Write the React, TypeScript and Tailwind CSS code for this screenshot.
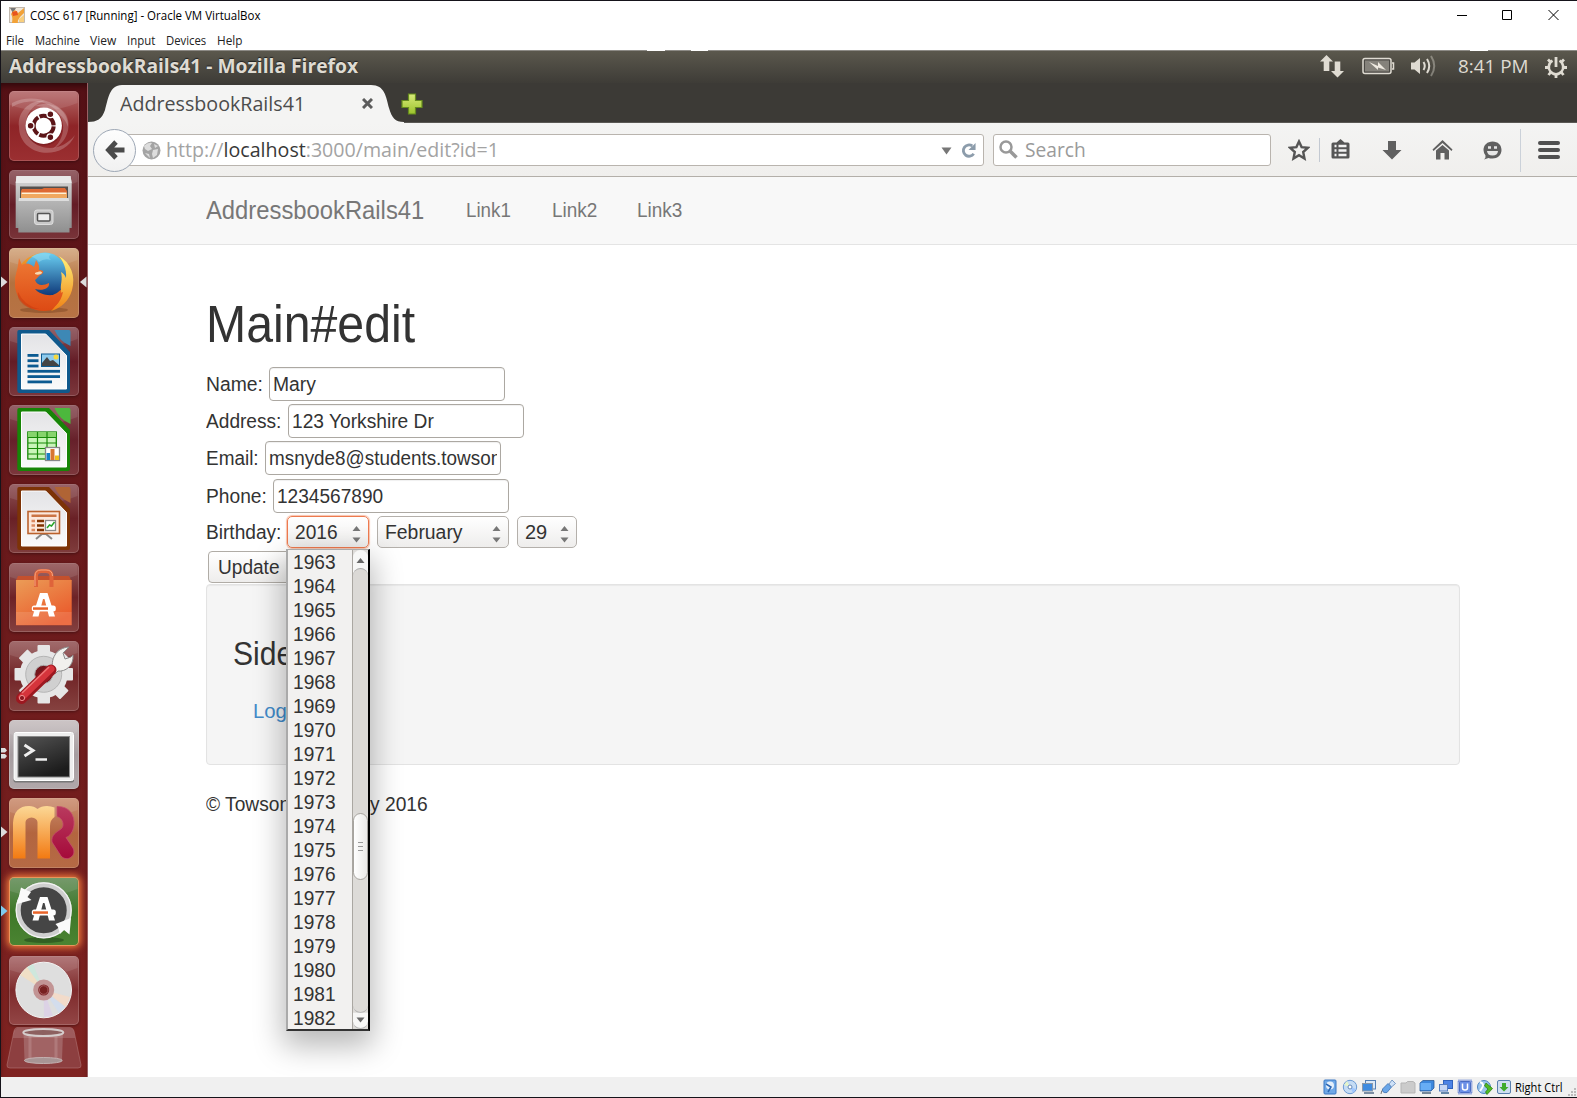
import React, { useLayoutEffect, useRef, useState } from "react";

/* Text stretched horizontally so that it occupies exactly `w` pixels. */
function Fit({ w, children, className = "" }: { w: number; children: React.ReactNode; className?: string }) {
  const ref = useRef<HTMLSpanElement>(null);
  const [scale, setScale] = useState(1);
  useLayoutEffect(() => {
    if (ref.current) setScale(w / ref.current.offsetWidth);
  }, [w]);
  return (
    <span className={"inline-block shrink-0 whitespace-pre " + className} style={{ width: w }}>
      <span ref={ref} className="inline-block origin-left" style={{ transform: `scaleX(${scale})` }}>
        {children}
      </span>
    </span>
  );
}

const menus: [string, number][] = [["File", 18], ["Machine", 45], ["View", 26], ["Input", 28.5], ["Devices", 40.5], ["Help", 25.5]];
const years = Array.from({ length: 20 }, (_, i) => 1963 + i);

/* ---------- launcher icons (70 x 70 canvas) ---------- */

function Dash() {
  return (
    <>
      <path d="M3 12 C20 3 44 8 56 22 C64 34 58 52 44 58 C60 44 56 22 40 14 C28 8 12 10 3 16Z" fill="#fff" opacity=".2" />
      <path d="M10 36 C8 20 22 8 36 10 C20 14 12 30 20 46 C28 60 52 62 66 44 C58 64 32 66 20 56 C12 50 10 42 10 36Z" fill="#fff" opacity=".22" />
      <path d="M26 15 C44 8 60 20 59 36 C56 26 46 16 26 15Z" fill="#fff" opacity=".2" />
      <circle cx="34.7" cy="36" r="18.6" fill="#5a0f14" opacity=".35" />
      <circle cx="34.7" cy="34.7" r="18.2" fill="#fff" />
      <circle cx="34.7" cy="34.7" r="10" fill="none" stroke="#5c1518" strokeWidth="4" strokeDasharray="19.4 1.55" strokeDashoffset="-.7" />
      <g fill="#5c1518" stroke="#fff" strokeWidth="1.3">
        <circle cx="21.6" cy="34.7" r="3.4" />
        <circle cx="41.4" cy="23.2" r="3.4" />
        <circle cx="41.4" cy="46.3" r="3.4" />
      </g>
    </>
  );
}
function Files() {
  return (
    <>
      <path d="M7.5 6H61.5L62.7 13V58H6.7V13Z" fill="url(#metal)" />
      <path d="M7.5 6H61.5L62.7 13H6.7Z" fill="#e9e9e9" />
      <rect x="11" y="16.500" width="48" height="14" fill="#55504d" />
      <path d="M13 19H33L35 18H56L58 21V30H12V21Z" fill="#dd6a35" />
      <rect x="12.500" y="22.500" width="45" height="1.500" fill="#fff3d8" />
      <rect x="12" y="24" width="46" height="5" fill="#f0a860" />
      <path d="M10 28H59.500L60.500 31V62.500H9.300V31Z" fill="url(#metal2)" />
      <path d="M10 28H59.500L60.200 31H9.500Z" fill="#ddd" />
      <rect x="25.500" y="40" width="18.500" height="14.500" rx="2.500" fill="#c9c9c9" stroke="#ddd" />
      <rect x="28.500" y="43.500" width="12.500" height="7.500" rx="1" fill="#eee" stroke="#555" strokeWidth="1.500" />
    </>
  );
}
function Firefox() {
  return (
    <>
      <ellipse cx="35" cy="62" rx="24" ry="3" fill="#5b2a10" opacity=".3" />
      <circle cx="35" cy="34" r="29" fill="url(#ffo)" />
      <circle cx="36" cy="26.500" r="22" fill="url(#ffb)" />
      <path d="M22 9Q30 3 42 6Q38 9 42 12Q35 10 30 14Q26 9 22 9Z" fill="#9fe2f5" opacity=".45" />
      <path d="M50 8 C62 15 67 28 63 42 C60 53 52 60 42 63 C49 56 53 49 52 42 C51 37 54 32 52 24 C54 25 56 27 57 30 C58 21 54 13 50 8Z" fill="url(#ffy)" />
      <path d="M10 10 L13 17 C18 14 21 16 25 19 L27 12 C29 15 31 18 30 22 C33 22 36 23 33 26 C29 28 29 30 26 32 C28 38 34 38 40 35 C41 41 33 43 26 41 C32 48 44 49 54 44 C52 55 44 62.500 34 62.500 C18 62.500 6 51 6 36 C6 26 9 20 9 17Z" fill="url(#fox)" />
      <path d="M26 25C30 23 33 23 33 25C31 27 28 27 26 26Z" fill="#f7d9b0" />
      <path d="M9 44Q15 58 30 61Q18 62 11 53Q8 49 9 44Z" fill="#c63a10" opacity=".5" />
    </>
  );
}
function Doc({ fill, light, children }: { fill: string; light: string; children: React.ReactNode }) {
  return (
    <>
      <path d="M10 3H40L61 25V63.500Q61 66 58.500 66H10.500Q8.300 66 8.300 63.500V5Q8.300 3 10 3Z" fill={fill} />
      <path d="M45.500 3H60Q61.500 3 61.500 5V19Q50 14 45.500 3Z" fill={light} />
      <path d="M12.500 7H36.700L57.500 28.500V62H12.500Z" fill="url(#page)" stroke="#fff" />
      {children}
    </>
  );
}
function Writer() {
  return (
    <Doc fill="#10598c" light="#3d88b5">
      <g fill="#0c5a91">
        <rect x="18.500" y="27" width="11" height="2.800" />
        <rect x="18.500" y="32.300" width="11" height="2.800" />
        <rect x="18.500" y="37.600" width="11" height="2.800" />
        <rect x="18.500" y="42.900" width="32.500" height="2.800" />
        <rect x="18.500" y="48.200" width="32.500" height="2.800" />
        <rect x="18.500" y="53.500" width="24.500" height="2.800" />
      </g>
      <rect x="32.500" y="27" width="18" height="12.500" fill="#8ecbed" stroke="#0c5a91" />
      <circle cx="47" cy="30" r="2.500" fill="#f5d83f" />
      <path d="M33 39V36L38 30L41 34L44 33L50 38V39Z" fill="#444" />
    </Doc>
  );
}
function Calc() {
  return (
    <Doc fill="#178507" light="#4cb83d">
      <rect x="18.800" y="27" width="28.500" height="27" fill="#c9f5b9" stroke="#188a08" strokeWidth="1.300" />
      <rect x="19" y="27" width="28" height="5.500" fill="#86d46c" />
      <path d="M28.500 27V54M38 27V54M19 32.500H47M19 38H47M19 43.500H47M19 49H47" stroke="#188a08" strokeWidth="1.200" />
      <rect x="36.500" y="42.500" width="14" height="13" fill="#fff" stroke="#888" strokeWidth="1.300" />
      <rect x="37.500" y="48" width="3.500" height="7" fill="#1680c4" />
      <rect x="41.500" y="44" width="4" height="11" fill="#d77632" />
      <rect x="46" y="50.500" width="4" height="4.500" fill="#efc11a" />
    </Doc>
  );
}
function Impress() {
  return (
    <Doc fill="#7d3307" light="#b06435">
      <path d="M27 55L33 50H37L43 55" fill="none" stroke="#888" strokeWidth="2" />
      <rect x="19" y="27.500" width="31.500" height="22" fill="#fce8dc" stroke="#bb622d" strokeWidth="1.600" />
      <rect x="22.500" y="30.500" width="25" height="2.500" fill="#cb7444" />
      <path d="M22.500 37H26M22.500 41.500H26M22.500 46H26" stroke="#db8961" strokeWidth="2.500" />
      <path d="M28 37H35M28 41.500H35M28 46H35" stroke="#803200" strokeWidth="2.500" />
      <rect x="36.500" y="36.500" width="10" height="10" fill="#fff" stroke="#8a8a8a" strokeWidth="1.300" />
      <path d="M38 44L40.500 41L42.500 42L45.500 38" fill="none" stroke="#27a327" strokeWidth="1.500" />
    </Doc>
  );
}
function AGlyph({ cy = 0 }: { cy?: number }) {
  return (
    <g transform={`translate(0 ${cy})`}>
      <path d="M31 30H38.500L46 53.500H40L35.500 36H34L29.500 53.500H23.500Z" fill="#fff" />
      <rect x="22.800" y="42.500" width="24" height="6" rx="2.500" fill="#fff" />
      <rect x="24" y="44.300" width="15" height="2.500" fill="#e9642a" />
    </g>
  );
}
function Software() {
  return (
    <>
      <path d="M9 13H60L62.500 18H6.700Z" fill="#c4502d" />
      <path d="M7 17H62.700V62.300H7Z" fill="url(#bag)" />
      <rect x="7" y="49" width="55.700" height="13" fill="#fff" opacity=".12" />
      <path d="M27 24V13Q27 8 32 8H37Q42.500 8 42.500 13V24" fill="none" stroke="#df633a" strokeWidth="4" />
      <path d="M26 23V13Q26 7 32 7H37Q43.500 7 43.500 13" fill="none" stroke="#f6a580" strokeWidth="1" />
      <AGlyph />
    </>
  );
}
function Settings() {
  return (
    <>
      <g fill="#e6e6e6">
        {[0, 45, 90, 135].map((a) => (
          <rect key={a} x="28.500" y="4" width="12.500" height="58.500" rx="1" transform={`rotate(${a} 34.700 33.300)`} />
        ))}
        <circle cx="34.700" cy="33.300" r="24" />
      </g>
      <circle cx="34.700" cy="33.300" r="18" fill="#d0d0d0" stroke="#b5b5b5" />
      <circle cx="34.700" cy="33.300" r="9" fill="#74161c" stroke="#aaa" />
      <path d="M44 30C41 18 47 7 60 6L54 12L56 18L62 16L64 14C65 25 56 31 49 30L46 33L41 28Z" fill="#f1f1ed" stroke="#8b8b8b" strokeWidth="1" />
      <path d="M42 29L12.500 57.500" stroke="#9c1820" strokeWidth="11" strokeLinecap="round" />
      <path d="M42 28L13 56" stroke="#d5343b" strokeWidth="7" strokeLinecap="round" />
      <path d="M40 26L13 52" stroke="#ee7777" strokeWidth="1.500" />
      <circle cx="13" cy="57" r="2.600" fill="#8d1820" stroke="#f09090" strokeWidth="1" />
    </>
  );
}
function Terminal() {
  return (
    <>
      <rect x="4.500" y="12.500" width="60.500" height="50" rx="2" fill="#777" />
      <rect x="5" y="12.500" width="59.500" height="48" rx="2" fill="#eee" stroke="#fff" />
      <rect x="9" y="16.500" width="51.500" height="40.500" fill="url(#term)" stroke="#888" />
      <path d="M15.500 25L24 30.500L15.500 36" fill="none" stroke="#eee" strokeWidth="3" />
      <path d="M26.500 39.500H38" stroke="#eee" strokeWidth="2.500" />
    </>
  );
}
function RubyMine() {
  return (
    <>
      <path d="M4 60.500V25Q5 8 20 8Q25 8 28.500 11Q32 8 38 8Q42 8 45.500 9.500V19Q41 22 41 28V60.500H28.500V24Q28 20 22.500 19.500Q17 20 16.500 24V60.500Z" fill="url(#mm)" />
      <path d="M48 8.500C60 8 66 17 65 27C64 34 61 38 57 39.500L64 50C68 58 58 64.500 52 58L43 44C42 37 47 34.500 52 31C56 28 54 20 48 18.500Z" fill="url(#mr)" stroke="#c54c6d" strokeWidth=".8" />
    </>
  );
}
function Updater() {
  return (
    <>
      <ellipse cx="35" cy="63" rx="20" ry="3" fill="#1c3e15" opacity=".5" />
      <circle cx="34.700" cy="33.300" r="25.500" fill="#454545" stroke="#cfcfcf" strokeWidth="5" />
      <circle cx="34.700" cy="33.300" r="27.500" fill="none" stroke="#f2f2f2" strokeWidth="1.300" />
      <path d="M12 10.500L8 27L22.500 23L18.500 20L22 15L17 13Z" fill="#fafafa" />
      <path d="M62 41L60.500 57.500L55 53L51 57L49 50L46.500 47Z" fill="#fafafa" />
      <AGlyph cy={-10} />
    </>
  );
}
function Disc() {
  return (
    <>
      <circle cx="34.700" cy="34" r="27.800" fill="#dedede" stroke="#f3f3f3" />
      <path d="M34.700 34L11 19L18 11Z" fill="#f4dfbf" opacity=".8" />
      <path d="M34.700 34L18 11L24 8Z" fill="#c9e8db" opacity=".8" />
      <path d="M34.700 34L56 51L50 57Z" fill="#cfdcf0" opacity=".8" />
      <path d="M34.700 34L61 41L57 51Z" fill="#f6d9c4" opacity=".8" />
      <path d="M34.700 34L44 60L35 61Z" fill="#dccde8" opacity=".7" />
      <circle cx="34.700" cy="34" r="8" fill="#80262a" stroke="#c29494" strokeWidth="5" />
      <circle cx="34.700" cy="34" r="4.300" fill="#772020" stroke="#a55c5c" />
    </>
  );
}

type Item = { bg: string; icon: React.ReactNode; left?: "white" | "blue" | "double"; right?: boolean; glow?: boolean };
const items: Item[] = [
  { bg: "from-[#b56a6c] via-[#8e2427] to-[#9b2f31]", icon: <Dash /> },
  { bg: "from-[#8a5057] via-[#641c26] to-[#793439]", icon: <Files /> },
  { bg: "from-[#d3a77f] via-[#b3713f] to-[#b77345]", icon: <Firefox />, left: "white", right: true },
  { bg: "from-[#8a5057] via-[#641c26] to-[#7c373c]", icon: <Writer /> },
  { bg: "from-[#8a5057] via-[#66202a] to-[#7c373c]", icon: <Calc /> },
  { bg: "from-[#8f5357] via-[#692026] to-[#7f3c3c]", icon: <Impress /> },
  { bg: "from-[#935759] via-[#6d2226] to-[#84403f]", icon: <Software /> },
  { bg: "from-[#975b5c] via-[#722528] to-[#864240]", icon: <Settings /> },
  { bg: "from-[#c7bfc0] via-[#a69da0] to-[#b1a8aa]", icon: <Terminal />, left: "double" },
  { bg: "from-[#cc9073] via-[#b3653f] to-[#b56a45]", icon: <RubyMine />, left: "white" },
  { bg: "from-[#668f5b] via-[#3e7828] to-[#4b8432]", icon: <Updater />, left: "blue", glow: true },
  { bg: "from-[#a9696b] via-[#7e2a2c] to-[#934646]", icon: <Disc /> },
];

function Launcher() {
  return (
    <nav className="flex w-[87px] shrink-0 flex-col border-r border-[#9a6165] bg-linear-to-b from-[#561116] to-[#7f2321] pt-[8px] shadow-[inset_0_6px_6px_-3px_#30080b]">
      {items.map((it, i) => (
        <div key={i} className="relative mb-[9.1px] h-[69.5px] w-full shrink-0 pl-[8px]">
          <div
            className={
              "h-[69.5px] w-[69.5px] rounded-[5px] bg-linear-to-b " + it.bg +
              (it.glow ? " shadow-[0_0_7px_2px_#f07a3c,inset_0_0_0_1px_#e9955c]" : " shadow-[0_1px_3px_#00000055,inset_0_0_0_1px_#ffffff2c]")
            }
          >
            <svg width="69.500" height="69.500" viewBox="0 0 69.500 69.500">
              <path d="M1 5Q1 1 5 1H65Q68.500 1 68.500 5V12Q35 26 1 14Z" fill="#fff" opacity=".1" />
              {it.icon}
            </svg>
          </div>
          {it.left && (
            <svg className="absolute left-0 top-[26px]" width="7" height="16" viewBox="0 0 7 16">
              {it.left === "double" ? (
                <path d="M0 2H4L6 4.500L4 6.500H0ZM0 8H4L6 10L4 12.500H0Z" fill="#ddd" />
              ) : (
                <path d="M0 2.500L6.500 8L0 13.500Z" fill={it.left === "blue" ? "#7fcbee" : "#ddd"} />
              )}
            </svg>
          )}
          {it.right && (
            <svg className="absolute right-0 top-[26px]" width="7" height="16" viewBox="0 0 7 16">
              <path d="M6.500 2.500L0 8L6.500 13.500Z" fill="#ddd" />
            </svg>
          )}
        </div>
      ))}
      <svg className="-mt-[7px] ml-[5px]" width="76" height="42" viewBox="0 0 76 42">
        <path d="M11 .5H64Q67 .5 68 4L75 38Q75.500 41 72 41H4Q.5 41 1 38L8 4Q9 .5 11 .5Z" fill="#8d3f40" stroke="#b07575" strokeOpacity=".6" />
        <path d="M11 1H64Q67 1 68 5L69 11H7L8 4Z" fill="#fff" opacity=".15" />
        <path d="M17.500 5L18.500 33Q37 39 56 33L57 5Z" fill="#c09a9a" opacity=".4" />
        <path d="M24 8V33M50 8V33" stroke="#dbbcbc" strokeWidth="3" opacity=".25" />
        <ellipse cx="37.300" cy="5.500" rx="20" ry="3.500" fill="#8d6060" stroke="#d5cccc" strokeWidth="2" />
        <ellipse cx="37.300" cy="33.500" rx="19" ry="3" fill="#a89595" stroke="#c4b2b2" />
      </svg>
    </nav>
  );
}

/* ---------- host window ---------- */

function TitleBar() {
  return (
    <header className="flex h-[28px] shrink-0 items-center pl-[8px] text-[12px] text-black">
      <svg width="16" height="16" viewBox="0 0 16 16">
        <rect x=".5" y=".5" width="15" height="15" fill="#efe7dc" stroke="#b5aba0" strokeWidth=".8" />
        <path d="M1 1H7L4 6Z" fill="#777" />
        <path d="M6 3L9 6L15 1V6L11 10Q8 14 9 16H3Q4 10 2 7Q4 4 6 3Z" fill="#f2a238" />
        <path d="M3 5L8 4L9 8L4 9Z" fill="#e8541e" />
        <path d="M10 12L15 8V15H10Z" fill="#f9cf7d" />
      </svg>
      <Fit w={230} className="ml-[5px] mt-[1px]">COSC 617 [Running] - Oracle VM VirtualBox</Fit>
      <svg className="ml-auto mr-[17px]" width="104" height="12" viewBox="0 0 104 12" fill="none" stroke="#000">
        <path d="M1 6.500H11M46.500 1.500H55.500V10.500H46.500ZM92.500 1L102.500 11M102.500 1L92.500 11" />
      </svg>
    </header>
  );
}

function MenuBar() {
  return (
    <div className="flex h-[21px] shrink-0 items-center gap-[10.500px] pl-[5px] pt-[3px] text-[12px] text-[#222]">
      {menus.map(([m, w]) => (
        <Fit key={m} w={w}>{m}</Fit>
      ))}
    </div>
  );
}

function Panel() {
  return (
    <div className="relative flex h-[33px] shrink-0 items-center border-t border-[#8d8b86] bg-linear-to-b from-[#5b584d] to-[#3e3c37] pb-[2px] pl-[8px] text-[#dfdbd2]">
      <div className="absolute -top-px left-[646px] h-px w-[18px] bg-white" />
      <div className="absolute -top-px left-[690px] h-px w-[17px] bg-white" />
      <div className="absolute -top-px left-[1469px] h-px w-[18px] bg-white" />
      <Fit w={349} className="text-[19.500px] font-bold leading-[26px] [text-shadow:0_-1px_1px_#222]">AddressbookRails41 - Mozilla Firefox</Fit>
      <div className="ml-auto flex items-center pr-[10px]">
        <svg width="25" height="24" viewBox="0 0 25 24" fill="#dfdbd2">
          <path d="M6.500 1L13 7.500H9.300V17H3.700V7.500H0ZM17.500 23.500L11 17H14.700V7.500H20.300V17H24Z" />
        </svg>
        <svg className="ml-[17px]" width="33" height="18" viewBox="0 0 33 18">
          <rect x="1" y="1.500" width="28" height="15" rx="2" fill="#4b4944" stroke="#dfdbd2" strokeWidth="1.500" />
          <rect x="3" y="3.500" width="24" height="11" fill="#85827b" />
          <path d="M30 6H31.500V12H30" fill="none" stroke="#dfdbd2" strokeWidth="1.500" />
          <path d="M7 5L16 9L16 5L24 13L16 10.500V13Z" fill="#eee9e0" />
        </svg>
        <svg className="ml-[15px]" width="27" height="24" viewBox="0 0 27 24" fill="none" stroke="#dfdbd2" strokeWidth="2">
          <path d="M1 8.500H4.500L10 4V20L4.500 15.500H1Z" fill="#dfdbd2" stroke="none" />
          <path d="M13.500 8Q16 12 13.500 16M17 5Q21.500 12 17 19" />
          <path d="M21 2Q27.500 12 21 22" opacity=".4" />
        </svg>
        <Fit w={70.500} className="ml-[20.500px] text-[19px] leading-[26px]">8:41 PM</Fit>
        <svg className="ml-[17px] mt-[1px]" width="22" height="22" viewBox="0 0 22 22" fill="none" stroke="#dfdbd2">
          <path d="M7.500 4.700A7.200 7.200 0 1 0 14.500 4.700" strokeWidth="2.600" />
          <path d="M11 1V11" strokeWidth="2.800" />
          <path d="M11 18V22M3.500 11.500H0M22 11.500H18.500M5.500 6L3 3.500M16.500 6L19 3.500M5.500 16.500L3.500 19M16.500 16.500L18.500 19" strokeWidth="2.800" />
        </svg>
      </div>
    </div>
  );
}

/* ---------- Firefox chrome ---------- */

function TabStrip() {
  return (
    <div className="flex h-[40px] shrink-0 bg-[#3c3a36] shadow-[inset_0_-1px_0_#5a5854]">
      <div className="relative h-[40px] w-[316px]">
        <svg width="316" height="40" viewBox="0 0 316 40">
          <path d="M0 40V39C9 39 14 36 17 27C20 17 21 2 34 2H283C297 2 298 14 301 25C304 35 307 39 316 39V40Z" fill="#f4f4f3" />
        </svg>
        <div className="absolute inset-0 flex items-center pl-[31.500px] pt-[1px] text-[19.500px] text-[#4c4c4c]">
          <Fit w={185.500} className="leading-[28px]">AddressbookRails41</Fit>
          <svg className="ml-[57px]" width="11" height="11" viewBox="0 0 11 11" stroke="#5c5c5c" strokeWidth="3">
            <path d="M1 1L10 10M10 1L1 10" />
          </svg>
        </div>
      </div>
      <svg className="-ml-[3px] mt-[10px]" width="22" height="22" viewBox="0 0 22 22">
        <path d="M7.500 1H14.500V7.500H21V14.500H14.500V21H7.500V14.500H1V7.500H7.500Z" fill="url(#plus)" stroke="#668b1d" strokeWidth="1.200" />
      </svg>
    </div>
  );
}

function Toolbar() {
  return (
    <div className="flex h-[54px] shrink-0 items-center border-b-[1.500px] border-b-[#b3afa9] bg-linear-to-b from-[#f4f4f3] to-[#f0efed] pl-[5px] pt-px text-[19.500px]">
      <div className="relative z-10 flex h-[43px] w-[43px] shrink-0 items-center justify-center rounded-full border border-[#9da7b5] bg-linear-to-b from-[#fdfdfd] to-[#f1f1f1]">
        <svg width="20" height="20" viewBox="0 0 20 20" fill="none" stroke="#4a4a4a" strokeWidth="4.800">
          <path d="M11 2L3.500 10L11 18M4 10H19.500" />
        </svg>
      </div>
      <div className="-ml-[12px] flex h-[32px] w-[860px] items-center rounded-[3px] border-[1.500px] border-[#b9b4ae] bg-white pl-[17px] pr-[6px]">
        <svg width="19" height="19" viewBox="0 0 19 19">
          <circle cx="9.500" cy="9.500" r="9" fill="#a4a4a4" />
          <path d="M2 5Q6 1 10 2L8 5L10 8L6 10L3 8ZM11 9L16 8L15 14L11 17L10 13ZM12 3L16 5L13 7ZM3 12L7 13L8 17Z" fill="#ddd" />
        </svg>
        <Fit w={333} className="ml-[5px] leading-[28px] text-[#a3a3a3]">http://<span className="text-[#383838]">localhost</span>:3000/main/edit?id=1</Fit>
        <svg className="ml-auto mt-[1px]" width="11" height="8" viewBox="0 0 11 8"><path d="M.5 .5H10.500L5.500 7.500Z" fill="#777" /></svg>
        <svg className="ml-[8px]" width="17" height="17" viewBox="0 0 18 18">
          <path d="M14.500 12.500A6 6 0 1 1 13 4.200" fill="none" stroke="#8c9cab" strokeWidth="3" />
          <path d="M16.500 1V8.500H9Z" fill="#8c9cab" />
        </svg>
      </div>
      <div className="ml-[9px] flex h-[32px] w-[277.500px] items-center rounded-[3px] border-[1.500px] border-[#b9b4ae] bg-white pl-[5px]">
        <svg className="-mt-[2px]" width="19" height="19" viewBox="0 0 19 19" fill="none" stroke="#999">
          <circle cx="7" cy="7" r="5.500" strokeWidth="2.500" />
          <path d="M11 11L17.500 17.500" strokeWidth="3.500" />
        </svg>
        <Fit w={61} className="ml-[7px] leading-[28px] text-[#9a9a9a]">Search</Fit>
      </div>
      <svg className="ml-[17.500px]" width="22" height="22" viewBox="0 0 22 22">
        <path d="M11 2.500L13.600 8.100L19.800 8.800L15.200 13L16.500 19.500L11 16.200L5.500 19.500L6.800 13L2.200 8.800L8.400 8.100Z" fill="none" stroke="#555" strokeWidth="2.400" />
      </svg>
      <div className="ml-[9px] h-[24px] w-px bg-[#c3c9d2]" />
      <svg className="-mt-[2px] ml-[11px]" width="19" height="20" viewBox="0 0 19 20">
        <path d="M2 3.500H5.500L9.500 0L13.500 3.500H17Q18.500 3.500 18.500 5V18Q18.500 19.500 17 19.500H2Q.5 19.500 .5 18V5Q.5 3.500 2 3.500Z" fill="#555" />
        <path d="M3.500 7H5.500M7.500 7H15.500M3.500 11.500H5.500M7.500 11.500H15.500M3.500 16H5.500M7.500 16H15.500" stroke="#f2f2f2" strokeWidth="2.400" />
      </svg>
      <svg className="-mt-[1px] ml-[31.500px]" width="20" height="20" viewBox="0 0 20 20">
        <path d="M6 1H14V10H19.500L10 19.500L.5 10H6Z" fill="#606060" />
      </svg>
      <svg className="-mt-[1px] ml-[30px]" width="21" height="20" viewBox="0 0 21 20" fill="#606060">
        <path d="M10.500 0L20.500 9.500L19.500 11L10.500 3L1.500 11L.5 9.500Z" />
        <path d="M4 10.500L10.500 5L17 10.500V19.500H12.500V13H8.500V19.500H4Z" />
      </svg>
      <svg className="ml-[30.500px]" width="19" height="19" viewBox="0 0 19 19">
        <path d="M9.500 .5C15 .5 18.500 4 18.500 9C18.500 14 14.500 17.500 9.500 17.500Q7 17.500 5.500 17L1 18.500Q3 16.500 2.500 14.500Q.5 12 .5 9C.5 4 4.500 .5 9.500 .5Z" fill="#606060" />
        <path d="M4 10H15Q14.500 14.500 9.500 14.500Q4.500 14.500 4 10Z" fill="#e7e7e7" />
        <path d="M5 6.500H8M11 6.500H14" stroke="#e7e7e7" strokeWidth="2.400" />
      </svg>
      <div className="ml-[17.500px] h-[43px] w-px bg-[#cbd1d9]" />
      <div className="-mt-[1px] ml-[17px] flex w-[22px] flex-col gap-[3px]">
        <div className="h-[4px] rounded-[2px] bg-[#505050]" />
        <div className="h-[4px] rounded-[2px] bg-[#505050]" />
        <div className="h-[4px] rounded-[2px] bg-[#505050]" />
      </div>
    </div>
  );
}

/* ---------- web page ---------- */

function Field({ label, lw, value, vw }: { label: string; lw: number; value: string; vw: number }) {
  return (
    <div className="flex h-[37.200px] items-center">
      <Fit w={lw}>{label}</Fit>
      <div className="ml-[6px] flex h-[34px] w-[236px] items-center rounded-[4px] border-[1.500px] border-[#aca8a2] bg-white px-[3px] shadow-[inset_0_1px_1px_#00000010]">
        <div className="w-full overflow-hidden whitespace-nowrap"><Fit w={vw}>{value}</Fit></div>
      </div>
    </div>
  );
}

function Arrows() {
  return (
    <svg className="ml-auto mt-[4px]" width="9" height="18" viewBox="0 0 9 18" fill="#777">
      <path d="M4.500 1L8.500 6H.5ZM4.500 17.500L.5 12.500H8.500Z" />
    </svg>
  );
}

function Select({ text, tw, className }: { text: string; tw: number; className: string }) {
  return (
    <div className={"flex h-[32px] shrink-0 items-center rounded-[5px] border-[1.500px] bg-linear-to-b from-white to-[#eeedec] pl-[7px] pr-[7.500px] " + className}>
      <Fit w={tw}>{text}</Fit>
      <Arrows />
    </div>
  );
}

function YearPopup() {
  return (
    <div className="absolute left-[80px] top-[34.500px] z-20 flex h-[482px] w-[84px] border-b-2 border-l-2 border-r-2 border-t border-b-[#333] border-l-[#aaa] border-r-black border-t-[#aaa] bg-[#f2f1f0] shadow-[0_12px_30px_3px_#00000048]">
      <ul className="w-[64px] pl-[5px]">
        {years.map((y) => (
          <li key={y} className="h-[24px] leading-[24px]"><Fit w={43}>{y}</Fit></li>
        ))}
      </ul>
      <div className="flex w-[16px] flex-col border-l border-[#aaa7a2] bg-[#dddbd8]">
        <div className="flex h-[25px] shrink-0 items-center justify-center rounded-t-[8px] bg-[#f7f7f6] pb-[3px]">
          <svg width="9" height="6" viewBox="0 0 9 6"><path d="M4.500 0L8.500 5H.5Z" fill="#666" /></svg>
        </div>
        <div className="-mt-[7px] h-[245px] shrink-0 rounded-t-[8px] border-t border-[#aaa] bg-[#dbd9d6]" />
        <div className="flex h-[67px] shrink-0 flex-col items-center justify-center gap-[3px] rounded-[8px] border-[1.500px] border-[#a7a49f] bg-linear-to-r from-white to-[#eae9e7]">
          <div className="h-px w-[5px] bg-[#999]" />
          <div className="h-px w-[5px] bg-[#999]" />
          <div className="h-px w-[5px] bg-[#999]" />
        </div>
        <div className="grow rounded-b-[8px] border-b border-[#aaa]" />
        <div className="-mt-[6px] flex h-[22px] shrink-0 items-center justify-center rounded-b-[8px] border-b border-[#aaa] bg-[#f7f7f6] pt-[5px] [clip-path:inset(6px_0_0_0)]">
          <svg width="9" height="6" viewBox="0 0 9 6"><path d="M4.500 5.500L8.500 .5H.5Z" fill="#666" /></svg>
        </div>
      </div>
    </div>
  );
}

function WebPage() {
  return (
    <div className="flex min-h-0 grow flex-col bg-white font-['Liberation_Sans',Arial,sans-serif] text-[20px] leading-[28px] text-[#333]">
      <div className="flex h-[68px] shrink-0 items-center border-b border-[#e4e4e4] bg-[#f8f8f8] pb-[2px] pl-[118px] text-[#777]">
        <Fit w={218} className="text-[25px]">AddressbookRails41</Fit>
        <Fit w={45} className="ml-[41.500px]">Link1</Fit>
        <Fit w={45.500} className="ml-[41px]">Link2</Fit>
        <Fit w={45.500} className="ml-[39.500px]">Link3</Fit>
      </div>
      <main className="pl-[118px] pr-[117.500px]">
        <h1 className="mt-[49px] h-[71.500px] text-[51px] leading-[62px]"><Fit w={209} className="-ml-[.5px]">Main#edit</Fit></h1>
        <Field label="Name:" lw={57} value="Mary" vw={42.500} />
        <Field label="Address:" lw={75.500} value="123 Yorkshire Dr" vw={142} />
        <Field label="Email:" lw={53} value="msnyde8@students.towson.edu" vw={269} />
        <Field label="Phone:" lw={60.500} value="1234567890" vw={106} />
        <div className="relative flex h-[35.200px] items-center">
          <Fit w={75.500}>Birthday:</Fit>
          <Select text="2016" tw={43} className="ml-[5.500px] w-[82px] border-[#ee7a4f] shadow-[0_0_1px_1px_#f7c3ad]" />
          <Select text="February" tw={77.500} className="ml-[8px] w-[132px] border-[#b4b0ab]" />
          <Select text="29" tw={22} className="ml-[8px] w-[60px] border-[#b4b0ab]" />
          <YearPopup />
        </div>
        <div className="flex h-[34.300px] items-center">
          <div className="ml-[2px] flex h-[32px] w-[84px] items-center rounded-[4px] border-[1.500px] border-[#b0aca6] bg-linear-to-b from-white to-[#eeedec] pl-[9px]">
            <Fit w={62}>Update</Fit>
          </div>
        </div>
        <section className="h-[181px] rounded-[4px] border border-[#e3e3e3] bg-[#f5f5f5] pl-[26px] pt-[51px] shadow-[inset_0_1px_1px_#0000000d]">
          <h3 className="text-[33px] leading-[36px]"><Fit w={104}>Sidebar</Fit></h3>
          <a className="ml-[20px] mt-[25.500px] block text-[#428bca]"><Fit w={62}>Logout</Fit></a>
        </section>
        <footer className="mt-[25.500px]"><Fit w={221.500}>© Towson University 2016</Fit></footer>
      </main>
    </div>
  );
}

/* ---------- status bar ---------- */

const statusIcons: React.ReactNode[] = [
  <><rect x="2" y="1" width="12" height="14" rx="1" fill="#6fa8e6" stroke="#3c79c4" /><circle cx="8" cy="6.500" r="4" fill="#e4effb" /><path d="M4 5L9 8L6 13" fill="none" stroke="#2c67b4" strokeWidth="1.500" /></>,
  <><circle cx="8" cy="8" r="6.700" fill="#c5dcf5" stroke="#6c9bd4" /><path d="M8 8L2 6L5 2Z" fill="#e5f5c9" /><path d="M8 8L14 10L11 14Z" fill="#9ec6ff" /><circle cx="8" cy="8" r="2" fill="#fff" stroke="#6488b8" /></>,
  <><rect x="4.500" y="1.500" width="10" height="8.500" fill="#dce9f7" stroke="#5580b5" /><rect x="1.500" y="4.500" width="10" height="7.500" fill="#3f8be0" stroke="#8a98a8" /><path d="M3 14H13" stroke="#7c8ea3" strokeWidth="2" /></>,
  <><path d="M1 15Q1 11 4 10" fill="none" stroke="#777" /><path d="M2.500 10L8 4.500L11.500 8L7 13.500Q2 14.500 2.500 10Z" fill="#6aa6e8" stroke="#3b70b1" strokeWidth=".8" /><path d="M9 5L12 1L15.500 4.500L11.500 8Z" fill="#cfe2f8" stroke="#5d87bb" strokeWidth=".8" /></>,
  <path d="M1 4H6L7.500 2.500H13L15 4V14H1Z" fill="#cbcbcb" stroke="#b5b5b5" />,
  <><path d="M1 4L4 1.500H15V9L12 12H1Z" fill="#3c87dd" stroke="#2b5c99" strokeWidth=".8" /><rect x="1.500" y="4" width="10.500" height="7" fill="#67adf5" /><path d="M3 14H12" stroke="#789" strokeWidth="2" /></>,
  <><rect x="5.500" y="1.500" width="9" height="8" fill="#4c83e6" stroke="#3062bc" /><rect x="1.500" y="5.500" width="8" height="6.500" fill="#c6d6f3" stroke="#557ec2" /><path d="M3 14H11" stroke="#68a" strokeWidth="2" /></>,
  <><rect x="1.500" y="1.500" width="13" height="13" fill="none" stroke="#4e6fd0" strokeDasharray="1 1" strokeWidth="2" /><rect x="2.500" y="2.500" width="11" height="11" rx="1" fill="#6b8fe6" stroke="#4a6cc4" /><path d="M5.500 4.500V9Q5.500 11 8 11Q10.500 11 10.500 9V4.500" fill="none" stroke="#fff" strokeWidth="1.500" /></>,
  <><circle cx="7" cy="8" r="6.500" fill="#9cc5ed" stroke="#4b84c2" /><path d="M3 3Q8 5 5 9L3 12" fill="none" stroke="#fff" strokeWidth="2" /><path d="M9 4L15.500 9.500L10 15.500L8.500 13L11 10L7.500 7Z" fill="#4fbb23" stroke="#2f8111" strokeWidth=".8" /></>,
  <><rect x="1.500" y="1.500" width="13" height="13" rx="1.500" fill="#cfdef0" stroke="#597fae" /><path d="M6 4H10V8H12.500L8 12.500L3.500 8H6Z" fill="#3eab2b" /></>,
];

function StatusBar() {
  return (
    <footer className="flex h-[20px] shrink-0 items-center bg-[#f0f0f0] pr-[1px] text-[12px] text-black">
      <div className="ml-auto flex gap-[3.300px]">
        {statusIcons.map((ic, i) => (
          <svg key={i} width="16" height="16" viewBox="0 0 16 16">{ic}</svg>
        ))}
      </div>
      <Fit w={47} className="ml-[3px] mt-[2px] leading-[18px]">Right Ctrl</Fit>
      <svg className="ml-[6px] self-end" width="8" height="9" viewBox="0 0 8 9" fill="#bbb">
        <path d="M6 0H8V2H6ZM3 3H5V5H3ZM6 3H8V5H6ZM0 6H2V8H0ZM3 6H5V8H3ZM6 6H8V8H6Z" />
      </svg>
    </footer>
  );
}

function Gradients() {
  const g = (id: string, a: string, b: string, x2 = 0) => (
    <linearGradient id={id} x1="0" y1="0" x2={x2} y2="1"><stop offset="0" stopColor={a} /><stop offset="1" stopColor={b} /></linearGradient>
  );
  return (
    <svg className="absolute" width="0" height="0">
      <defs>
        {g("metal", "#d8d8d8", "#8e8e8e")}
        {g("metal2", "#b9b9b9", "#8f8f8f")}
        {g("ffo", "#f0a02c", "#da4a12")}
        {g("ffb", "#6bd0f3", "#0d3677")}
        {g("ffy", "#fff27a", "#ef8114")}
        {g("fox", "#ee7a35", "#dd4a14")}
        {g("page", "#e3e3e6", "#fafafa")}
        {g("bag", "#eb9c57", "#ea5b2c", 0.6)}
        {g("term", "#555", "#1c1c1c", 0.5)}
        {g("mm", "#fbd896", "#f37a12")}
        {g("mr", "#b93a5e", "#a50a3a")}
        {g("plus", "#d8ea7a", "#9cc32c")}
      </defs>
    </svg>
  );
}

export default function App() {
  return (
    <div className="flex h-[1098px] w-[1577px] flex-col overflow-hidden border-b border-l border-t border-[#15131a] bg-white font-['Open_Sans','Noto_Sans',sans-serif]">
      <Gradients />
      <TitleBar />
      <MenuBar />
      <Panel />
      <div className="flex h-[994px] shrink-0">
        <Launcher />
        <div className="flex min-w-0 grow flex-col">
          <TabStrip />
          <Toolbar />
          <WebPage />
        </div>
      </div>
      <StatusBar />
    </div>
  );
}
